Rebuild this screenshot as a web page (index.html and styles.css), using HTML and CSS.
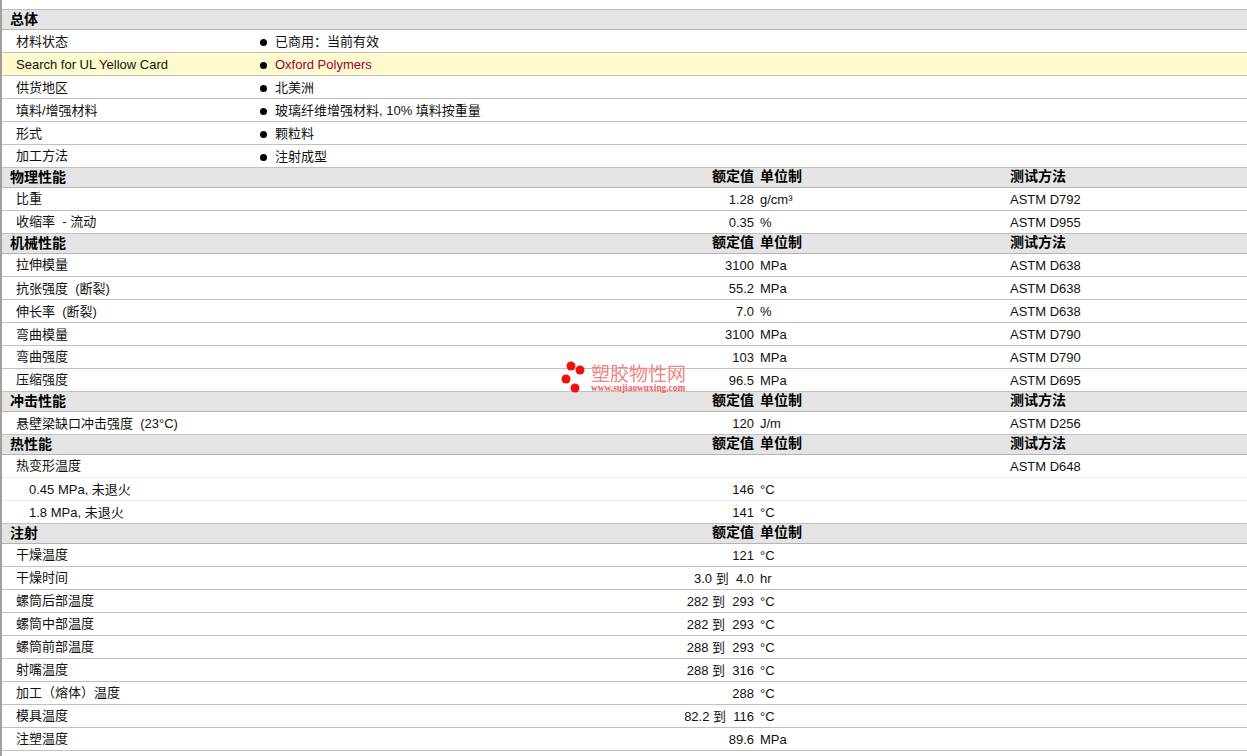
FILE: index.html
```html
<!DOCTYPE html>
<html lang="zh">
<head>
<meta charset="utf-8">
<title>塑胶物性表</title>
<link rel="stylesheet" href="styles.css">
</head>
<body>
<main class="sheet">
  <div class="head first"><span class="c1">总体</span></div>
  <div class="row"><span class="c1">材料状态</span><span class="item">已商用：当前有效</span></div>
  <div class="row hl"><span class="c1">Search for UL Yellow Card</span><span class="item link">Oxford Polymers</span></div>
  <div class="row"><span class="c1">供货地区</span><span class="item">北美洲</span></div>
  <div class="row"><span class="c1">填料/增强材料</span><span class="item">玻璃纤维增强材料, 10% 填料按重量</span></div>
  <div class="row"><span class="c1">形式</span><span class="item">颗粒料</span></div>
  <div class="row"><span class="c1 zh">加工方法</span><span class="item">注射成型</span></div>

  <div class="head"><span class="c1">物理性能</span><span class="c2">额定值</span><span class="c3">单位制</span><span class="c4">测试方法</span></div>
  <div class="row"><span class="c1 zh">比重</span><span class="c2">1.28</span><span class="c3">g/cm³</span><span class="c4">ASTM D792</span></div>
  <div class="row"><span class="c1 zh">收缩率&nbsp; - 流动</span><span class="c2">0.35</span><span class="c3">%</span><span class="c4">ASTM D955</span></div>

  <div class="head"><span class="c1">机械性能</span><span class="c2">额定值</span><span class="c3">单位制</span><span class="c4">测试方法</span></div>
  <div class="row"><span class="c1 zh">拉伸模量</span><span class="c2">3100</span><span class="c3">MPa</span><span class="c4">ASTM D638</span></div>
  <div class="row"><span class="c1">抗张强度&nbsp; (断裂)</span><span class="c2">55.2</span><span class="c3">MPa</span><span class="c4">ASTM D638</span></div>
  <div class="row"><span class="c1">伸长率&nbsp; (断裂)</span><span class="c2">7.0</span><span class="c3">%</span><span class="c4">ASTM D638</span></div>
  <div class="row"><span class="c1">弯曲模量</span><span class="c2">3100</span><span class="c3">MPa</span><span class="c4">ASTM D790</span></div>
  <div class="row"><span class="c1 zh">弯曲强度</span><span class="c2">103</span><span class="c3">MPa</span><span class="c4">ASTM D790</span></div>
  <div class="row"><span class="c1 zh">压缩强度</span><span class="c2">96.5</span><span class="c3">MPa</span><span class="c4">ASTM D695</span></div>

  <div class="head"><span class="c1">冲击性能</span><span class="c2">额定值</span><span class="c3">单位制</span><span class="c4">测试方法</span></div>
  <div class="row"><span class="c1">悬壁梁缺口冲击强度&nbsp; (23°C)</span><span class="c2">120</span><span class="c3">J/m</span><span class="c4">ASTM D256</span></div>

  <div class="head"><span class="c1">热性能</span><span class="c2">额定值</span><span class="c3">单位制</span><span class="c4">测试方法</span></div>
  <div class="row soft"><span class="c1 zh">热变形温度</span><span class="c2"></span><span class="c3"></span><span class="c4">ASTM D648</span></div>
  <div class="row soft"><span class="c1 sub">0.45 MPa, 未退火</span><span class="c2">146</span><span class="c3">°C</span></div>
  <div class="row"><span class="c1 sub">1.8 MPa, 未退火</span><span class="c2">141</span><span class="c3">°C</span></div>

  <div class="head"><span class="c1">注射</span><span class="c2">额定值</span><span class="c3">单位制</span></div>
  <div class="row"><span class="c1 zh">干燥温度</span><span class="c2">121</span><span class="c3">°C</span></div>
  <div class="row"><span class="c1 zh">干燥时间</span><span class="c2">3.0 到&nbsp;&nbsp;4.0</span><span class="c3">hr</span></div>
  <div class="row"><span class="c1 zh">螺筒后部温度</span><span class="c2">282 到&nbsp;&nbsp;293</span><span class="c3">°C</span></div>
  <div class="row"><span class="c1 zh">螺筒中部温度</span><span class="c2">282 到&nbsp;&nbsp;293</span><span class="c3">°C</span></div>
  <div class="row"><span class="c1 zh">螺筒前部温度</span><span class="c2">288 到&nbsp;&nbsp;293</span><span class="c3">°C</span></div>
  <div class="row"><span class="c1 zh">射嘴温度</span><span class="c2">288 到&nbsp;&nbsp;316</span><span class="c3">°C</span></div>
  <div class="row"><span class="c1 zh">加工（熔体）温度</span><span class="c2">288</span><span class="c3">°C</span></div>
  <div class="row"><span class="c1 zh">模具温度</span><span class="c2">82.2 到&nbsp;&nbsp;116</span><span class="c3">°C</span></div>
  <div class="row"><span class="c1 zh">注塑温度</span><span class="c2">89.6</span><span class="c3">MPa</span></div>
</main>
<div class="mark">
  <svg class="dots" width="28" height="34" viewBox="0 0 28 34" aria-hidden="true">
    <circle cx="10" cy="6" r="4.5"/><circle cx="19" cy="10" r="4.5"/><circle cx="5" cy="19" r="4.5"/><circle cx="14" cy="28" r="4.5"/>
  </svg>
  <div class="mark-text">
    <div class="mark-cn">塑胶物性网</div>
    <div class="mark-url">www.sujiaowuxing.com</div>
  </div>
</div>
</body>
</html>
```
FILE: styles.css
```css
html, body { margin: 0; padding: 0; background: #fff; }
body {
  height: 756px;
  overflow: hidden;
  box-sizing: border-box;
  border-left: 2px solid #a0a0a0;
  padding-top: 9px;
  font-family: "Liberation Sans", "Noto Sans CJK SC", sans-serif;
  font-size: 13px;
  color: #111;
}
.sheet { display: flex; flex-direction: column; }
.row, .head {
  display: grid;
  grid-template-columns: 256px 496px 256px 1fr;
  box-sizing: border-box;
  white-space: pre;
}
.row {
  height: 23px;
  padding-top: 2px;
  line-height: 20px;
  border-bottom: 1px solid #c0c0c0;
}
.row.soft { border-bottom-color: #ededed; }
.row.hl { background: #fffacd; }
.head {
  height: 20px;
  line-height: 19px;
  font-size: 14px;
  font-weight: bold;
  color: #000;
  border-bottom: 1px solid #b4b4b4;
  background: repeating-conic-gradient(#e6e6e6 0 25%, #e2e2e2 0 50%) 0 0 / 2px 2px;
}
.head .c2, .head .c3, .head .c4 { line-height: 17px; }
.head.first { height: 21px; border-top: 1px solid #c0c0c0; }
.head .c1 { padding-left: 8px; }
.c1 { padding-left: 14px; }
.c1.sub { padding-left: 27px; }
.c1.zh { line-height: 18px; }
.c2 { text-align: right; }
.c3 { padding-left: 6px; }
.head.first .c1 { grid-column: 1 / -1; }
.item {
  grid-column: 2 / -1;
  display: flex;
  align-items: center;
  padding-left: 17px;
  position: relative;
}
.item::before {
  content: "";
  position: absolute;
  left: 2px;
  top: 6.5px;
  width: 7px;
  height: 7px;
  border-radius: 50%;
  background: #000;
}
.link { color: #990033; }
.mark {
  position: absolute;
  left: 561px;
  top: 361px;
  display: flex;
  gap: 2px;
  pointer-events: none;
}
.dots { display: block; fill: #f01010; margin-top: -1px; }
.mark-text { padding-top: 2px; }
.mark-cn {
  font-size: 19px;
  line-height: 20px;
  color: #f08585;
  font-family: "Noto Sans CJK SC", sans-serif;
}
.mark-url {
  font-family: "Liberation Serif", serif;
  font-size: 9.4px;
  font-weight: bold;
  line-height: 10px;
  color: #ee5a5a;
}
```
